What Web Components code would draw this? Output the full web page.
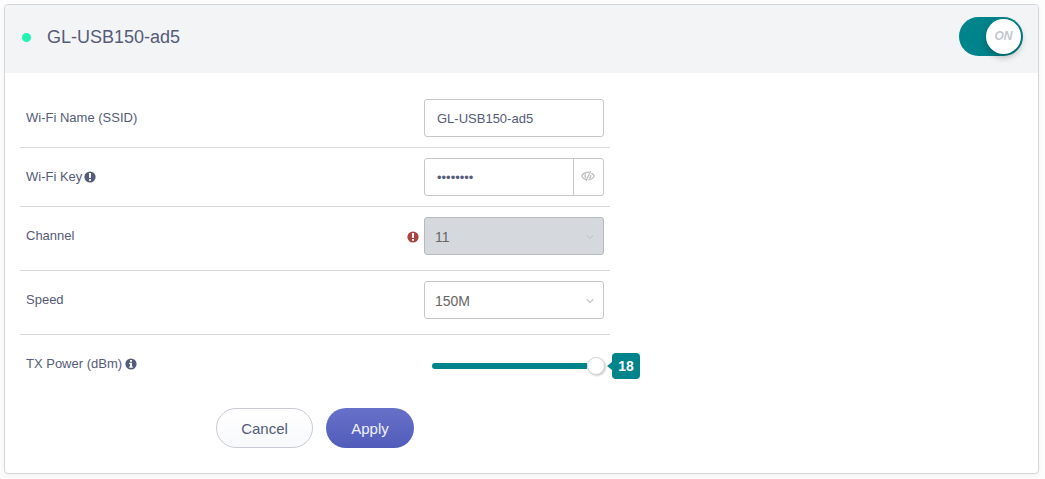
<!DOCTYPE html>
<html lang="en">
<head>
<meta charset="utf-8">
<title>Wireless</title>
<style>
html,body{margin:0;height:100%;overflow:hidden;background:#fcfcfc}
body{font-family:"Liberation Sans",Arial,sans-serif;color:#555b78;font-size:13px;line-height:20px}
</style>
</head>
<body>
<wifi-card name="GL-USB150-ad5">
  <setting-row style="height:73px" label="Wi-Fi Name (SSID)"><text-field>GL-USB150-ad5</text-field></setting-row>
  <setting-row label="Wi-Fi Key" note="alert"><text-field secret>••••••••</text-field></setting-row>
  <setting-row style="height:63px" label="Channel"><mark-icon slot="warn" kind="alert" style="color:#a94442"></mark-icon><select-field disabled>11</select-field></setting-row>
  <setting-row style="height:63px" label="Speed"><select-field>150M</select-field></setting-row>
  <setting-row last style="height:63px" label="TX Power (dBm)" note="info"><power-slider>18</power-slider></setting-row>
  <pill-button slot="actions">Cancel</pill-button>
  <pill-button slot="actions" primary>Apply</pill-button>
</wifi-card>
<script>
const define = (name, render) => customElements.define(name, class extends HTMLElement {
  constructor() { super(); this.attachShadow({mode: 'open'}); }
  connectedCallback() { this.shadowRoot.innerHTML = render(this); }
});

define('mark-icon', el => `
<style>:host{display:block;width:12px;height:12px}svg{display:block}</style>
<svg width="12" height="12" viewBox="0 0 12 12"><circle cx="6" cy="6" r="5.6" fill="currentColor"/>
${el.getAttribute('kind') === 'info'
  ? '<path d="M5 2h2v1.7H5zM4.2 4.7H7v3.7h.8v1.3H4.2V8.4H5V6h-.8z" fill="#fff"/>'
  : '<path d="M4.9 2h2.2l-.25 5h-1.7zM5 7.9h2v1.8H5z" fill="#fff"/>'}</svg>`);

define('toggle-switch', () => `
<style>
:host{display:flex;justify-content:flex-end;align-items:center;box-sizing:border-box;width:64px;height:39px;padding:2px;border-radius:20px;background:#00848c}
span{width:35px;height:35px;border-radius:50%;background:#fff;box-shadow:0 3px 7px rgba(0,0,0,.28);font:italic bold 12px/35px "Liberation Sans",Arial,sans-serif;color:#c3c6cf;text-align:center}
</style><span><slot></slot></span>`);

define('wifi-card', el => `
<style>
:host{display:block;box-sizing:border-box;width:1035px;height:470px;margin:4px;border:1px solid #d5d6d9;border-radius:4px;background:#fff;box-shadow:0 2px 5px rgba(0,0,0,.04);overflow:hidden}
header{display:flex;align-items:center;height:68px;box-sizing:border-box;padding:0 15px 5px 17px;background:#f3f4f6}
i{width:9px;height:9px;border-radius:50%;background:#1ff5b3;margin-top:1px}
h1{flex:1;margin:0 0 0 16px;font-size:18px;line-height:24px;font-weight:400}
main{display:block;width:590px;margin-left:15px;padding-top:1px}
footer{display:flex;gap:13px;margin:9px 0 0 196px}
</style>
<header><i></i><h1>${el.getAttribute('name')}</h1><toggle-switch>ON</toggle-switch></header>
<main><slot></slot><footer><slot name="actions"></slot></footer></main>`);

define('setting-row', el => `
<style>
:host{display:flex;box-sizing:content-box;height:58px;border-bottom:1px solid #d8d9dc}
:host([last]){border-color:transparent}
.label{display:flex;flex:none;align-items:center;gap:2px;width:377px;height:20px;margin:19px 0 0 6px;white-space:nowrap}
.label.info{gap:3px}
:host(:first-child) .label{margin-top:34px}
.warn{display:flex;flex:none;width:21px;margin-top:24px;margin-left:-1px}
.warn ::slotted(*){margin-left:5px}
.field{flex:none;margin-top:10px;margin-left:1px}
:host(:first-child) .field{margin-top:25px}
</style>
<div class="label ${el.getAttribute('note') || ''}">${el.getAttribute('label')}${el.hasAttribute('note') ? `<mark-icon kind="${el.getAttribute('note')}"></mark-icon>` : ''}</div>
<div class="warn"><slot name="warn"></slot></div><div class="field"><slot></slot></div>`);

define('text-field', el => `
<style>
:host{display:flex;box-sizing:border-box;width:180px;height:38px;border:1px solid #c6c7c9;border-radius:3px;background:#fff}
.v{flex:1;padding-left:12px;height:36px;line-height:38px}
.eye{display:flex;align-items:center;justify-content:center;width:29px;border-left:1px solid #c6c7c9}
.eye svg{margin:0 1px 2px 0}
</style><div class="v"><slot></slot></div>
${el.hasAttribute('secret') ? `<div class="eye"><svg width="14" height="12" viewBox="0 0 14 12" fill="none" stroke="#c2c2c2" stroke-width="1.4">
<path d="M5.3 9.8C3.300 9.300 1.700 7.900.7 6 2.100 3.500 4.400 2.200 7 2.200l1 .1M10.400 3.200C11.600 3.900 12.600 4.800 13.300 6 12 8.300 10 9.700 7.300 9.900M4.800 7.800C3.900 6.800 3.800 4.400 5 3.300M9.600 5C10 6.700 9.200 7.900 8.200 8.400M9.700 1 4.900 11"/></svg></div>` : ''}`);

define('select-field', () => `
<style>
:host{display:flex;align-items:center;justify-content:space-between;box-sizing:border-box;width:180px;height:38px;padding:2px 9px 0 10px;border:1px solid #c6c7c9;border-radius:3px;background:#fff;color:#666;font-size:14px;--arrow:#c4c4c4}
:host([disabled]){background:#d5d9dd;border-color:#b6babe;--arrow:#c6cace}
svg{stroke:var(--arrow)}
</style><slot></slot><svg width="8" height="6" viewBox="0 0 8 6" fill="none" stroke-width="1.2"><path d="M.7 1.200 4 4.400 7.300 1.200"/></svg>`);

define('power-slider', () => `
<style>
:host{display:flex;align-items:center;width:217px;height:26px;margin:8px 0 0 8px}
.bar{width:155px;height:6px;border-radius:3px 0 0 3px;background:#00848c}
.knob{box-sizing:border-box;width:18px;height:18px;border:1px solid #d2d4d6;border-radius:50%;background:#fff;box-shadow:1px 1px 2px rgba(0,0,0,.2)}
.tip{width:0;margin-left:2px;border:4px solid transparent;border-right:5px solid #00848c;border-left:0}
.num{width:28px;height:26px;border-radius:4px;background:#00848c;color:#fff;font-size:14px;font-weight:700;line-height:26px;text-align:center}
</style><div class="bar"></div><div class="knob"></div><div class="tip"></div><div class="num"><slot></slot></div>`);

define('pill-button', () => `
<style>
:host{display:flex;align-items:center;justify-content:center;box-sizing:border-box;width:97px;height:40px;padding-top:2px;border:1px solid #c9cbd4;border-radius:20px;background:linear-gradient(#fff,#f8f9fb);font-size:15px}
:host([primary]){width:88px;border:0;background:linear-gradient(#6871c9,#515cba);color:#f0f1ff}
</style><slot></slot>`);
</script>
</body>
</html>
